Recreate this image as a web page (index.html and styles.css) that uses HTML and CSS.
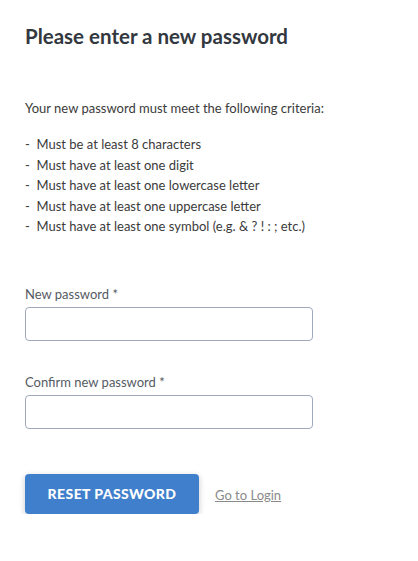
FILE: index.html
```html
<!DOCTYPE html>
<html lang="en">
<head>
<meta charset="utf-8">
<title>Reset password</title>
<link rel="stylesheet" href="styles.css">
</head>
<body>
<main class="page">
  <h1 class="title">Please enter a new password</h1>
  <p class="intro">Your new password must meet the following criteria:</p>
  <ul class="criteria">
    <li>-&nbsp; Must be at least 8 characters</li>
    <li>-&nbsp; Must have at least one digit</li>
    <li>-&nbsp; Must have at least one lowercase letter</li>
    <li>-&nbsp; Must have at least one uppercase letter</li>
    <li>-&nbsp; Must have at least one symbol (e.g. &amp; ? ! : ; etc.)</li>
  </ul>
  <form class="form">
    <div class="field">
      <label class="label" for="pw">New password *</label>
      <input class="input" id="pw" type="password">
    </div>
    <div class="field">
      <label class="label" for="pw2">Confirm new password *</label>
      <input class="input" id="pw2" type="password">
    </div>
    <div class="actions">
      <button class="btn" type="button">RESET PASSWORD</button>
      <a class="link" href="#">Go to Login</a>
    </div>
  </form>
</main>
</body>
</html>
```

FILE: styles.css
```css
html, body {
  margin: 0;
  padding: 0;
  background: #ffffff;
}
body {
  font-family: Lato, "Open Sans", sans-serif;
  color: #3b3b3b;
}
.page {
  padding: 24px 25px 0;
}
.title {
  margin: 0;
  font-size: 20.5px;
  font-weight: 700;
  line-height: 24px;
  color: #333840;
}
.intro {
  margin: 50px 0 0;
  font-size: 13px;
  line-height: 20px;
}
.criteria {
  list-style: none;
  margin: 16px 0 0;
  padding: 0;
  font-size: 13px;
  line-height: 20.5px;
}
.form {
  margin-top: 48px;
  display: flex;
  flex-direction: column;
  gap: 32px;
}
.field {
  display: flex;
  flex-direction: column;
  gap: 4px;
}
.label {
  font-size: 13px;
  line-height: 18px;
  color: #555b63;
}
.input {
  box-sizing: border-box;
  width: 288px;
  height: 34px;
  margin: 0;
  border: 1px solid #9eaabb;
  border-radius: 4px;
  background: #fff;
  font: inherit;
}
.actions {
  margin-top: 13px;
  display: flex;
  align-items: center;
  gap: 16px;
}
.btn {
  width: 174px;
  height: 40px;
  border: none;
  border-radius: 4px;
  background: #3f7fcb;
  color: #fff;
  font-family: Lato, sans-serif;
  font-weight: 900;
  font-size: 14px;
  letter-spacing: 0.4px;
  box-shadow: 0 2px 6px rgba(0, 0, 0, 0.22);
  padding: 0;
}
.link {
  margin-top: 2px;
  font-size: 13px;
  color: #8a8a8a;
  text-decoration: underline;
}
```
